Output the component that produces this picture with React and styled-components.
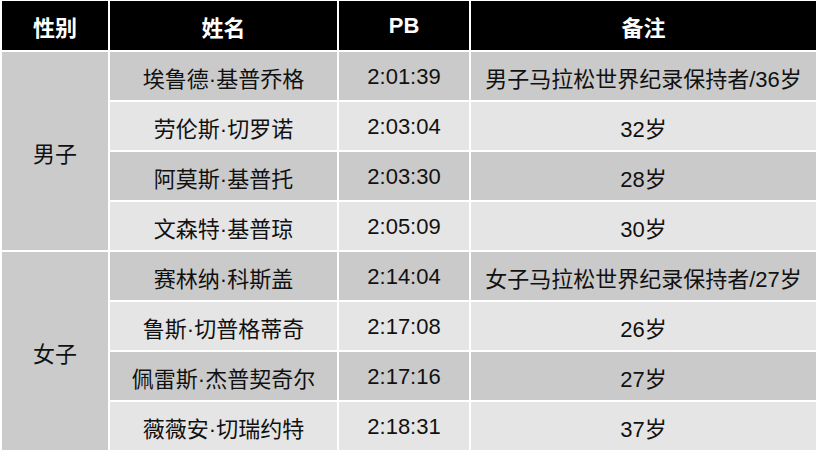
import React from 'react';
import styled, { createGlobalStyle } from 'styled-components';

const GlobalStyle = createGlobalStyle`
  body {
    margin: 0;
    background: #ffffff;
    font-family: "Liberation Sans", "Noto Sans CJK SC", sans-serif;
  }
`;

const Table = styled.table`
  border-collapse: separate;
  border-spacing: 2px 2.3px;
  table-layout: fixed;
  width: 818px;
  margin-top: -1px;
`;

const HeadCell = styled.th`
  background: #000000;
  color: #ffffff;
  font-size: 22px;
  font-weight: bold;
  height: 49px;
  padding: 0;
  text-align: center;
  vertical-align: middle;
  width: ${(p) => p.w}px;
`;

const Cell = styled.td`
  background: ${(p) => (p.dark ? '#cacaca' : '#e5e5e5')};
  color: #111111;
  font-size: 22px;
  height: 48px;
  padding: 1px 0 0;
  box-sizing: border-box;
  text-align: center;
  vertical-align: middle;
  white-space: nowrap;
`;

const GroupCell = styled(Cell)`
  background: #cbcbcb;
`;

const groups = [
  {
    label: '男子',
    rows: [
      ['埃鲁德·基普乔格', '2:01:39', '男子马拉松世界纪录保持者/36岁'],
      ['劳伦斯·切罗诺', '2:03:04', '32岁'],
      ['阿莫斯·基普托', '2:03:30', '28岁'],
      ['文森特·基普琼', '2:05:09', '30岁'],
    ],
  },
  {
    label: '女子',
    rows: [
      ['赛林纳·科斯盖', '2:14:04', '女子马拉松世界纪录保持者/27岁'],
      ['鲁斯·切普格蒂奇', '2:17:08', '26岁'],
      ['佩雷斯·杰普契奇尔', '2:17:16', '27岁'],
      ['薇薇安·切瑞约特', '2:18:31', '37岁'],
    ],
  },
];

export default function App() {
  return (
    <>
      <GlobalStyle />
      <Table>
        <thead>
          <tr>
            <HeadCell w={106}>性别</HeadCell>
            <HeadCell w={227}>姓名</HeadCell>
            <HeadCell w={130}>PB</HeadCell>
            <HeadCell w={345}>备注</HeadCell>
          </tr>
        </thead>
        <tbody>
          {groups.map((g) =>
            g.rows.map((r, i) => {
              const dark = i % 2 === 0;
              return (
                <tr key={g.label + i}>
                  {i === 0 && <GroupCell rowSpan={g.rows.length}>{g.label}</GroupCell>}
                  <Cell dark={dark}>{r[0]}</Cell>
                  <Cell dark={dark}>{r[1]}</Cell>
                  <Cell dark={dark}>{r[2]}</Cell>
                </tr>
              );
            })
          )}
        </tbody>
      </Table>
    </>
  );
}
